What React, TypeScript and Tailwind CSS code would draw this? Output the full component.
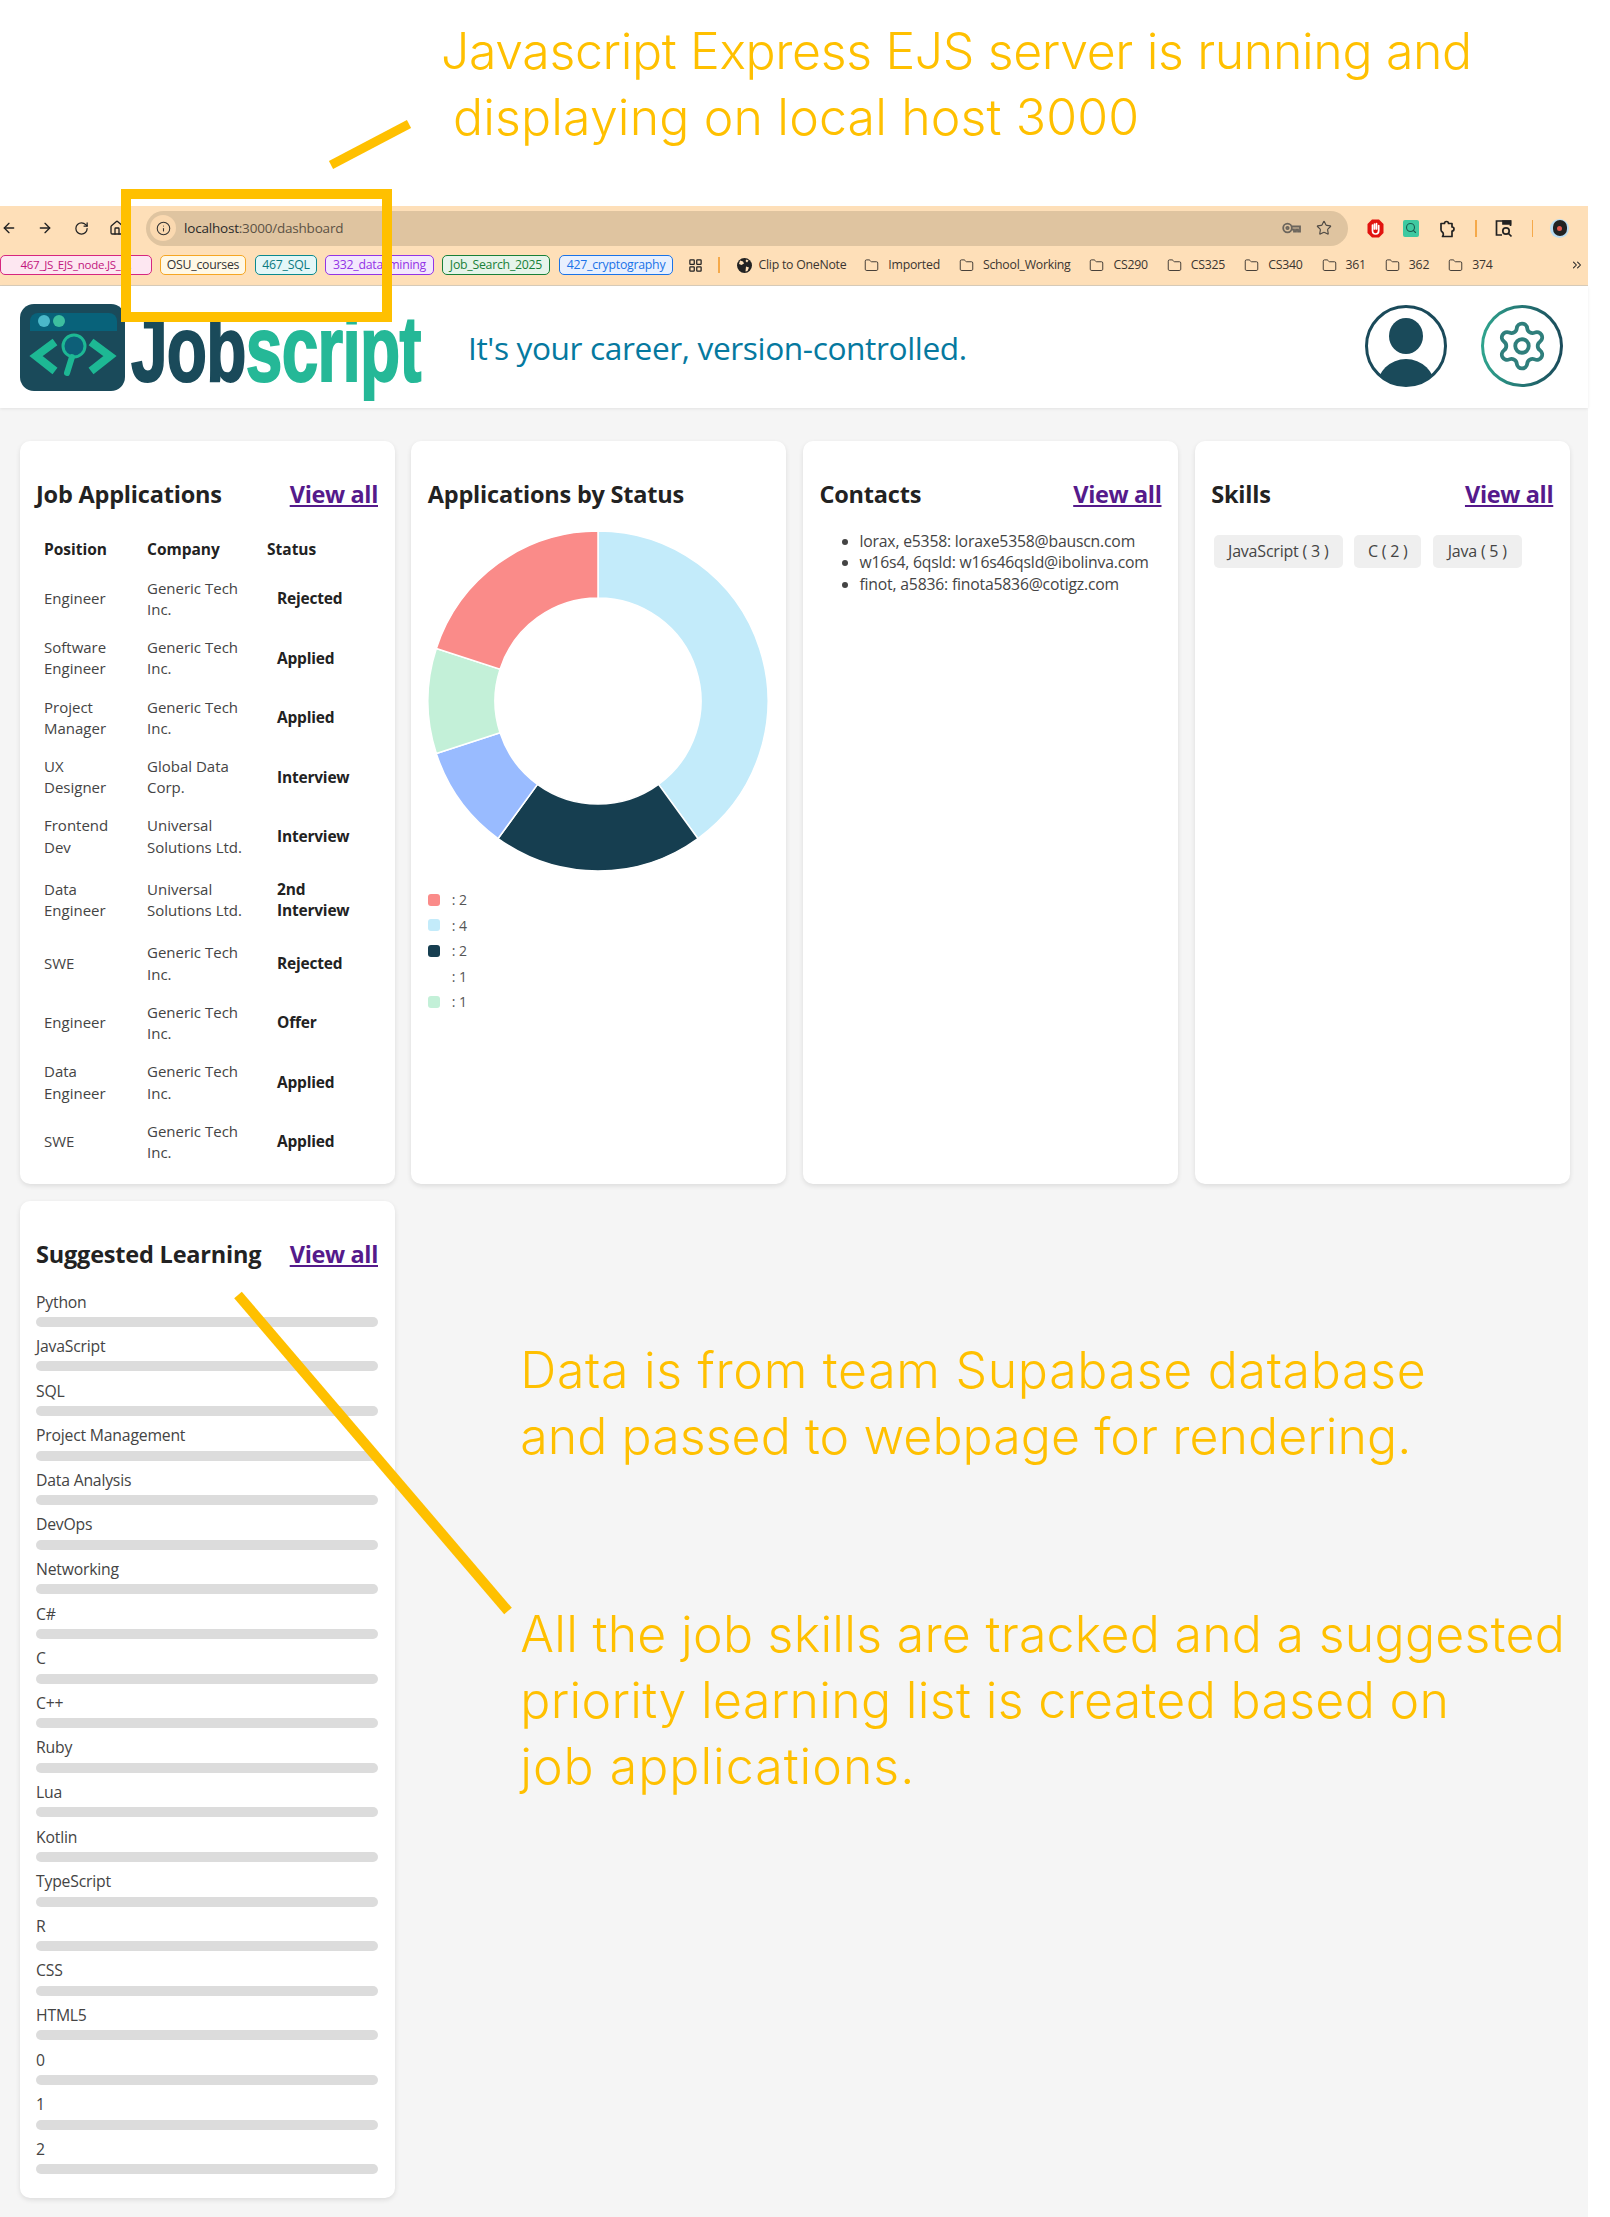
import { ArrowLeft, ArrowRight, RotateCw, Home, Info, Star, Folder, LayoutGrid, Settings, ChevronsRight, Search } from "lucide-react";

const bookmarks = [
  { label: "467_JS_EJS_node.JS_l...", cls: "w-[152px] ml-0 text-[11.5px] border-[#d6267f] bg-[#fde7f1] text-[#c2167d]" },
  { label: "OSU_courses", cls: "w-[86px] ml-[8px] border-[#f5a623] bg-[#fff8e6] text-[#333]" },
  { label: "467_SQL", cls: "w-[62px] ml-[9px] border-[#0b8a8f] bg-[#e4f7f8] text-[#0b7a80]" },
  { label: "332_data_mining", cls: "w-[109px] ml-[8px] border-[#9334e6] bg-[#f3e8fd] text-[#9334e6]" },
  { label: "Job_Search_2025", cls: "w-[108px] ml-[8px] border-[#188038] bg-[#e6f4ea] text-[#188038]" },
  { label: "427_cryptography", cls: "w-[114px] ml-[9px] border-[#1a73e8] bg-[#e8f0fe] text-[#1a73e8]" },
];

const folders = [
  { label: "Imported", cls: "ml-[18px]" },
  { label: "School_Working", cls: "ml-[19px]" },
  { label: "CS290", cls: "ml-[19px]" },
  { label: "CS325", cls: "ml-[19px]" },
  { label: "CS340", cls: "ml-[19px]" },
  { label: "361", cls: "ml-[19px]" },
  { label: "362", cls: "ml-[19px]" },
  { label: "374", cls: "ml-[19px]" },
];

const jobs = [
  ["Engineer", "Generic Tech Inc.", "Rejected"],
  ["Software Engineer", "Generic Tech Inc.", "Applied"],
  ["Project Manager", "Generic Tech Inc.", "Applied"],
  ["UX Designer", "Global Data Corp.", "Interview"],
  ["Frontend Dev", "Universal Solutions Ltd.", "Interview"],
  ["Data Engineer", "Universal Solutions Ltd.", "2nd Interview"],
  ["SWE", "Generic Tech Inc.", "Rejected"],
  ["Engineer", "Generic Tech Inc.", "Offer"],
  ["Data Engineer", "Generic Tech Inc.", "Applied"],
  ["SWE", "Generic Tech Inc.", "Applied"],
];

const statusChart = [
  { count: 4, color: "#C3EBFA" },
  { count: 2, color: "#163E50" },
  { count: 1, color: "#99BBFF" },
  { count: 1, color: "#C3F0D8" },
  { count: 2, color: "#FA8B89" },
];

const legend = [
  { count: 2, cls: "bg-[#FA8B89]" },
  { count: 4, cls: "bg-[#C3EBFA]" },
  { count: 2, cls: "bg-[#163E50]" },
  { count: 1, cls: "bg-white" },
  { count: 1, cls: "bg-[#C3F0D8]" },
];

const learning = [
  "Python", "JavaScript", "SQL", "Project Management", "Data Analysis", "DevOps", "Networking",
  "C#", "C", "C++", "Ruby", "Lua", "Kotlin", "TypeScript", "R", "CSS", "HTML5", "0", "1", "2",
];

function Donut() {
  const total = statusChart.reduce((sum, s) => sum + s.count, 0);
  const cx = 171;
  const cy = 171;
  const R = 170;
  const r = 103;
  let angle = 0;

  const point = (radius: number, a: number) => {
    const rad = ((a - 90) * Math.PI) / 180;
    return `${cx + radius * Math.cos(rad)} ${cy + radius * Math.sin(rad)}`;
  };

  return (
    <svg width="342" height="342" viewBox="0 0 342 342" className="block">
      {statusChart.map((s, i) => {
        const start = angle;
        const end = angle + (s.count / total) * 360;
        angle = end;
        const large = end - start > 180 ? 1 : 0;
        const d = `M ${point(R, start)} A ${R} ${R} 0 ${large} 1 ${point(R, end)} L ${point(r, end)} A ${r} ${r} 0 ${large} 0 ${point(r, start)} Z`;
        return <path key={i} d={d} fill={s.color} stroke="#fff" strokeWidth="1.5" />;
      })}
    </svg>
  );
}

function CardHeader({ title, link = true }: { title: string; link?: boolean }) {
  return (
    <div className="flex justify-between items-center h-[32px] mt-[38px]">
      <h3 className="text-[23.5px] font-bold text-[#222] tracking-[-0.2px] whitespace-nowrap">{title}</h3>
      {link && (
        <a className="text-[23.5px] font-bold text-[#551A8B] underline tracking-[-0.35px] whitespace-nowrap">View all</a>
      )}
    </div>
  );
}

function Logo() {
  return (
    <svg width="105" height="87" viewBox="0 0 105 87" className="shrink-0">
      <rect width="105" height="87" rx="14" fill="#1a4a5a" />
      <path d="M10 27V17a8 8 0 0 1 8-8h71a8 8 0 0 1 8 8v10z" fill="#08627a" />
      <circle cx="24" cy="17" r="6" fill="#4bb8c9" />
      <circle cx="39" cy="17" r="6" fill="#3dbf9f" />
      <path d="M35 38L16 52l19 15" fill="none" stroke="#1db894" strokeWidth="8" strokeLinejoin="miter" />
      <path d="M71 38l19 14-19 15" fill="none" stroke="#1db894" strokeWidth="8" strokeLinejoin="miter" />
      <circle cx="54" cy="42" r="11" fill="#0d5f78" stroke="#1db894" strokeWidth="3" />
      <path d="M52 53l-5 16" stroke="#1db894" strokeWidth="6" strokeLinecap="round" />
    </svg>
  );
}

function UserBadge() {
  return (
    <svg width="82" height="82" viewBox="0 0 82 82">
      <defs>
        <clipPath id="userClip">
          <circle cx="41" cy="41" r="39" />
        </clipPath>
      </defs>
      <circle cx="41" cy="41" r="39.5" fill="#fff" stroke="#1a4a5a" strokeWidth="3" />
      <ellipse cx="41" cy="31" rx="17" ry="18" fill="#1a4a5a" />
      <ellipse cx="41" cy="82" rx="29" ry="28" fill="#1a4a5a" clipPath="url(#userClip)" />
    </svg>
  );
}

function GearBadge() {
  return (
    <div className="relative w-[82px] h-[82px] rounded-full p-[3px] bg-gradient-to-r from-[#2fa58e] to-[#1a4a5a]">
      <div className="w-full h-full rounded-full bg-white flex items-center justify-center">
        <Settings size={54} strokeWidth={1.7} color="#2f7f7c" />
      </div>
    </div>
  );
}

function KeyIcon() {
  return (
    <svg width="19" height="14" viewBox="0 0 19 14" fill="none" stroke="#6b655c" strokeWidth="1.8" className="ml-auto">
      <circle cx="5.5" cy="7" r="4.3" />
      <circle cx="5.5" cy="7" r="1.2" />
      <path d="M10 5.5h8v5h-2v-2h-2v2h-2v-2h-2" />
    </svg>
  );
}

function StopIcon() {
  return (
    <svg width="17" height="19" viewBox="0 0 17 19" className="ml-[19px] shrink-0">
      <path d="M5 0.5h7l4.5 4.5v9l-4.5 4.5H5L0.5 14V5z" fill="#e1130f" />
      <path d="M5.5 6v5.5c0 2.2 1.4 3.5 3.2 3.5s3-1.2 3-3.5V6.5M7.5 5v5M9.5 4.5V10" fill="none" stroke="#fff" strokeWidth="1.7" strokeLinecap="round" />
    </svg>
  );
}

function PuzzleIcon() {
  return (
    <svg width="17" height="19" viewBox="0 0 17 19" fill="none" stroke="#222" strokeWidth="1.7" strokeLinejoin="round" className="ml-[20px] shrink-0">
      <path d="M2 4.5h3.5a2 2 0 0 1 4 0H13v3.5a2 2 0 0 1 0 4v5.5H3.5c1.2-1.4 1.2-3.6-0.5-4.8-0.8-0.5-1-1.2-1-2.2z" />
    </svg>
  );
}

function TabSearchIcon() {
  return (
    <svg width="18" height="19" viewBox="0 0 18 19" fill="none" stroke="#222" strokeWidth="1.7" className="ml-[18px] shrink-0">
      <path d="M7 16H1.5V2h14v5" />
      <path d="M8 2h7.5v3H8z" fill="#222" />
      <circle cx="11" cy="12" r="3.2" />
      <path d="M13.5 14.5l3 3" />
    </svg>
  );
}

function GlobeIcon() {
  return (
    <svg width="15" height="15" viewBox="0 0 15 15" className="ml-[17px] shrink-0">
      <circle cx="7.5" cy="7.5" r="7.5" fill="#222" />
      <path d="M3 2.5l3 1 1 2-2.5 1.5L2 6zM9 8.5l3 1-1.5 3.5-2 .5zM9.5 1.5l2 1-1.5 2-1.5-1.5z" fill="#FEDFB8" />
    </svg>
  );
}

export default function App() {
  return (
    <div className="relative w-[1610px] min-h-[2217px] bg-white font-['Open_Sans',sans-serif] text-[#444] overflow-hidden">
      {/* top note */}
      <div className="h-[206px] pt-[18px] pl-[441px] text-[50px] leading-[66px] text-[#FFC000] font-['Inter',sans-serif] font-light whitespace-nowrap">
        <div className="tracking-[-0.35px]">Javascript Express EJS server is running and</div>
        <div className="ml-[12px] tracking-[0.15px]">displaying on local host 3000</div>
      </div>

      <div className="w-[1588px]">
        {/* browser chrome */}
        <div className="h-[80px] bg-[#FEDFB8] border-b-[1.5px] border-[#d9cdbb]">
          <div className="h-[44px] flex items-center">
            <ArrowLeft size={16} strokeWidth={2} color="#222" className="ml-[1px]" />
            <ArrowRight size={16} strokeWidth={2} color="#222" className="ml-[20px]" />
            <RotateCw size={15} strokeWidth={2} color="#222" className="ml-[21px]" />
            <Home size={16} strokeWidth={2} color="#222" className="ml-[20px]" />
            <div className="ml-[21px] w-[1202px] h-[35px] rounded-full bg-[#DFC4A0] flex items-center pl-[4px] pr-[16px]">
              <div className="w-[26px] h-[26px] rounded-full bg-[#FBD9B0] flex items-center justify-center">
                <Info size={15} strokeWidth={1.7} color="#333" />
              </div>
              <span className="ml-[8px] text-[13.5px] text-[#5c5244] tracking-[-0.2px]">
                <span className="text-[#2a2a2a]">localhost</span>:3000/dashboard
              </span>
              <KeyIcon />
              <Star size={16} strokeWidth={1.7} color="#4f4a44" className="ml-[15px]" />
            </div>
            <StopIcon />
            <div className="ml-[19px] w-[16px] h-[17px] bg-[#3ec9a0] rounded-[2px] flex items-center justify-center">
              <Search size={12} strokeWidth={2.2} color="#1b5d4e" />
            </div>
            <PuzzleIcon />
            <div className="ml-[19px] w-[1.5px] h-[17px] bg-[#f5a94a]" />
            <TabSearchIcon />
            <div className="ml-[19px] w-[1.5px] h-[17px] bg-[#f5a94a]" />
            <div className="ml-[17px] w-[19px] h-[19px] rounded-full bg-[#b9dcf2] flex items-center justify-center">
              <div className="w-[14px] h-[16px] rounded-full bg-[#222] flex items-center justify-center">
                <div className="w-[5px] h-[5px] rounded-full bg-[#e2574c]" />
              </div>
            </div>
          </div>
          <div className="h-[30px] flex items-center text-[12.3px] tracking-[-0.25px] whitespace-nowrap">
            {bookmarks.map((b) => (
              <div key={b.label} className={`h-[20px] shrink-0 rounded-[5px] border flex items-center justify-center ${b.cls}`}>
                {b.label}
              </div>
            ))}
            <LayoutGrid size={15} strokeWidth={2} color="#222" className="ml-[15px] shrink-0" />
            <div className="ml-[15px] w-[1.5px] h-[16px] bg-[#f5a94a] shrink-0" />
            <GlobeIcon />
            <span className="ml-[7px] text-[#3b3530]">Clip to OneNote</span>
            {folders.map((f) => (
              <div key={f.label} className={`flex items-center shrink-0 text-[#3b3530] ${f.cls}`}>
                <Folder size={15} strokeWidth={1.5} color="#3b3530" />
                <span className="ml-[9px]">{f.label}</span>
              </div>
            ))}
            <ChevronsRight size={14} strokeWidth={1.8} color="#222" className="ml-auto mr-[4px]" />
          </div>
        </div>

        {/* app header */}
        <header className="h-[122px] bg-white flex items-center pl-[20px] pr-[25px] shadow-[0_1px_3px_rgba(0,0,0,0.08)] relative">
          <Logo />
          <div className="w-[298px] ml-[6px] h-[85px] -mt-[5px] whitespace-nowrap">
            <span className="block origin-left [transform:scaleX(0.715)] font-['Liberation_Sans',sans-serif] font-bold text-[92px] leading-[90px] tracking-[-1px] [-webkit-text-stroke:2px] mt-[2px]">
              <span className="text-[#1a4a5a]">Job</span>
              <span className="text-[#25b897]">script</span>
            </span>
          </div>
          <div className="ml-[39px] mt-[1px] text-[31.7px] text-[#05799f] tracking-[-0.4px] whitespace-nowrap">It's your career, version-controlled.</div>
          <div className="ml-auto flex items-center gap-[34px] -mt-[3px]">
            <UserBadge />
            <GearBadge />
          </div>
        </header>

        {/* dashboard */}
        <main className="bg-[#F5F5F5] min-h-[1809px] pt-[33px] pl-[19.5px]">
          <div className="grid grid-cols-[repeat(4,375px)] gap-x-[16.75px] gap-y-[17px] items-stretch">
            <section className="h-[743px] bg-white rounded-[10px] shadow-[0_2px_5px_rgba(0,0,0,0.1)] px-[16.5px]">
              <CardHeader title="Job Applications" />
              <table className="mt-[20px] w-[342px] table-fixed border-collapse text-[15px] leading-[21.33px]">
                <colgroup>
                  <col className="w-[103px]" />
                  <col className="w-[120px]" />
                  <col className="w-[119px]" />
                </colgroup>
                <thead>
                  <tr className="text-left text-[#222] text-[15.5px]">
                    <th className="p-2 pb-[9px] font-bold">Position</th>
                    <th className="p-2 pb-[9px] font-bold">Company</th>
                    <th className="p-2 pb-[9px] font-bold">Status</th>
                  </tr>
                </thead>
                <tbody>
                  {jobs.map((job, i) => (
                    <tr key={i}>
                      <td className="py-[8.4px] pl-2 pr-[12px]">{job[0]}</td>
                      <td className="py-[8.4px] pl-2 pr-0">{job[1]}</td>
                      <td className="py-[8.4px] pl-2 pr-0">
                        <span className="inline-block py-1 px-[10px] text-[15.5px] font-bold text-[#222] tracking-[-0.2px]">{job[2]}</span>
                      </td>
                    </tr>
                  ))}
                </tbody>
              </table>
            </section>

            <section className="h-[743px] bg-white rounded-[10px] shadow-[0_2px_5px_rgba(0,0,0,0.1)] px-[16.5px]">
              <CardHeader title="Applications by Status" link={false} />
              <div className="mt-[19px] -ml-[1px]">
                <Donut />
              </div>
              <ul className="mt-[15px] text-[14px] leading-[25.5px] text-[#555]">
                {legend.map((l, i) => (
                  <li key={i} className="flex items-center">
                    <span className={`w-[12px] h-[12px] rounded-[3px] ${l.cls}`} />
                    <span className="ml-[12px]">: {l.count}</span>
                  </li>
                ))}
              </ul>
            </section>

            <section className="h-[743px] bg-white rounded-[10px] shadow-[0_2px_5px_rgba(0,0,0,0.1)] px-[16.5px]">
              <CardHeader title="Contacts" />
              <ul className="mt-[20px] pl-[40px] list-disc text-[15.75px] leading-[21.33px] whitespace-nowrap tracking-[-0.2px]">
                <li>lorax, e5358: loraxe5358@bauscn.com</li>
                <li>w16s4, 6qsld: w16s46qsld@ibolinva.com</li>
                <li>finot, a5836: finota5836@cotigz.com</li>
              </ul>
            </section>

            <section className="h-[743px] bg-white rounded-[10px] shadow-[0_2px_5px_rgba(0,0,0,0.1)] px-[16.5px]">
              <CardHeader title="Skills" />
              <div className="mt-[24px] ml-[2.5px] flex gap-[11.5px] text-[16px] leading-[21px] tracking-[-0.2px]">
                <span className="h-[33px] w-[129px] flex items-center justify-center rounded-[5px] bg-[#EFEFEF]">JavaScript ( 3 )</span>
                <span className="h-[33px] w-[67px] flex items-center justify-center rounded-[5px] bg-[#EFEFEF]">C ( 2 )</span>
                <span className="h-[33px] w-[89px] flex items-center justify-center rounded-[5px] bg-[#EFEFEF]">Java ( 5 )</span>
              </div>
            </section>

            <section className="h-[997px] bg-white rounded-[10px] shadow-[0_2px_5px_rgba(0,0,0,0.1)] px-[16.5px]">
              <CardHeader title="Suggested Learning" />
              <div className="mt-[20.5px]">
                {learning.map((skill) => (
                  <div key={skill} className="mb-[9.28px]">
                    <div className="text-[15.75px] leading-[21.33px] tracking-[-0.2px]">{skill}</div>
                    <div className="mt-[4px] h-[10px] rounded-[5px] bg-[#DCDCDC]" />
                  </div>
                ))}
              </div>
            </section>

            <div className="col-span-3 pl-[109px] pt-[136px] text-[50px] leading-[66px] text-[#FFC000] font-['Inter',sans-serif] font-light whitespace-nowrap">
              <div className="tracking-[0.7px]">Data is from team Supabase database</div>
              <div className="tracking-[0.08px]">and passed to webpage for rendering.</div>
              <div className="mt-[132px] tracking-[0.28px]">All the job skills are tracked and a suggested</div>
              <div className="tracking-[0.33px]">priority learning list is created based on</div>
              <div className="tracking-[1px]">job applications.</div>
            </div>
          </div>
        </main>
      </div>

      {/* annotation box and lines drawn over the screenshot */}
      <div className="absolute left-[121px] top-[189px] w-[271px] h-[133px] border-[10px] border-[#FFC000]" />
      <svg className="absolute left-0 top-0 pointer-events-none" width="1610" height="2217" viewBox="0 0 1610 2217">
        <line x1="331" y1="165" x2="409" y2="124" stroke="#FFC000" strokeWidth="9" />
        <line x1="238" y1="1295" x2="508" y2="1611" stroke="#FFC000" strokeWidth="10" />
      </svg>
    </div>
  );
}
